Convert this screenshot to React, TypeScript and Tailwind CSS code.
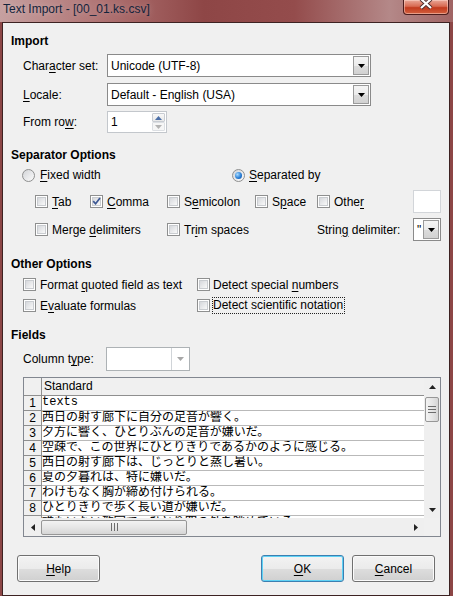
import React from "react";

const F = "font-['Liberation_Sans','Noto_Sans',sans-serif]";

function M({ t, i }: { t: string; i?: number }) {
  if (i === undefined || i < 0) return <span className="whitespace-nowrap">{t}</span>;
  return (
    <span className="whitespace-nowrap">
      {t.slice(0, i)}
      <span className="underline decoration-1 underline-offset-[2px]">{t[i]}</span>
      {t.slice(i + 1)}
    </span>
  );
}

function Check({ checked }: { checked?: boolean }) {
  return (
    <span className="relative flex h-[13px] w-[13px] shrink-0 items-center justify-center border border-[#8e8f8f] bg-white">
      <span className="h-[9px] w-[9px] border border-[#c9ccd0] bg-[linear-gradient(135deg,#d6d8dc,#f9f9f9)]" />
      {checked && (
        <svg className="absolute left-[0px] top-[0px]" width="11" height="11" viewBox="0 0 11 11">
          <path d="M2.2 5.2 L4.6 7.8 L9 2" fill="none" stroke="#3b5793" strokeWidth="1.7" />
        </svg>
      )}
    </span>
  );
}

function Radio({ on }: { on?: boolean }) {
  return (
    <span className="flex h-[13px] w-[13px] shrink-0 items-center justify-center rounded-full border border-[#8e8f8f] bg-[linear-gradient(135deg,#d2d4d8,#fbfbfb)]">
      {on && (
        <span className="h-[7px] w-[7px] rounded-full bg-[radial-gradient(circle_at_35%_35%,#a8dbff,#2a7fd6_55%,#0c4c9c)]" />
      )}
    </span>
  );
}

function Tri({ dir = "down", color = "#000" }: { dir?: "down" | "up" | "left" | "right"; color?: string }) {
  const d =
    dir === "down"
      ? "M0 0H7L3.5 4Z"
      : dir === "up"
      ? "M0 4H7L3.5 0Z"
      : dir === "left"
      ? "M4 0V7L0 3.5Z"
      : "M0 0V7L4 3.5Z";
  const w = dir === "down" || dir === "up" ? 7 : 4;
  const h = dir === "down" || dir === "up" ? 4 : 7;
  return (
    <svg width={w} height={h} viewBox={`0 0 ${w} ${h}`}>
      <path d={d} fill={color} />
    </svg>
  );
}

function Combo({ text, className, disabled }: { text?: string; className?: string; disabled?: boolean }) {
  return (
    <div
      className={`flex shrink-0 border bg-white ${
        disabled ? "border-[#adb2b5] p-0" : "border-[#8a8a8a] p-[1px]"
      } ${className ?? ""}`}
    >
      <div className="flex flex-1 items-center overflow-hidden whitespace-nowrap pl-[2px]">{text}</div>
      {disabled ? (
        <div className="flex w-[18px] items-center justify-center border-l border-[#d0d4d8] bg-white">
          <Tri color="#a7a7a7" />
        </div>
      ) : (
        <div className="flex w-[16px] items-center justify-center border border-[#9a9a9a] bg-[linear-gradient(#f5f5f5,#ebebeb_50%,#dcdcdc_51%,#d2d2d2)]">
          <Tri />
        </div>
      )}
    </div>
  );
}

function Btn({ children, focus }: { children: React.ReactNode; focus?: boolean }) {
  return (
    <div
      className={`flex h-[27px] w-[83px] shrink-0 items-center justify-center rounded-[3px] border ${
        focus ? "border-[#3c7fb1] shadow-[inset_0_0_0_1px_#5fd2f5]" : "border-[#707070] shadow-[inset_0_0_0_1px_#fbfbfb]"
      } bg-[linear-gradient(#f3f3f3,#ebebeb_50%,#dddddd_51%,#d0d0d0)]`}
    >
      {children}
    </div>
  );
}

const rows = [
  "texts",
  "西日の射す廊下に自分の足音が響く。",
  "夕方に響く、ひとりぶんの足音が嫌いだ。",
  "空疎で、この世界にひとりきりであるかのように感じる。",
  "西日の射す廊下は、じっとりと蒸し暑い。",
  "夏の夕暮れは、特に嫌いだ。",
  "わけもなく胸が締め付けられる。",
  "ひとりきりで歩く長い道が嫌いだ。",
  "誰もいない教室で、ひとり窓の外を眺めている。",
];

export default function App() {
  return (
    <div className={`${F} h-[596px] w-[453px] overflow-hidden bg-[#8c4646] text-[12px] text-black`}>
      {/* Title bar */}
      <div className="flex h-[22px] items-start bg-[linear-gradient(90deg,#c6a0a0_0%,#b07474_22%,#8e4646_45%,#944c4c_65%,#b48888_86%,#a06464_100%)]">
        <div className="pl-[3px] pt-[1px] text-[12px] leading-[16px] text-[#13243c] [text-shadow:0_0_6px_rgba(255,255,255,0.35)]">
          Text Import - [00_01.ks.csv]
        </div>
        <div className="ml-auto mr-[4px] flex h-[15px] w-[46px] items-start justify-center rounded-b-[4px] border border-t-0 border-[#4b1d1d] bg-[linear-gradient(#e9a797,#d86a52_45%,#c23a1e_55%,#d2603e)] shadow-[inset_0_0_0_1px_rgba(255,220,210,0.5)]">
          <svg width="14" height="10" viewBox="0 0 14 10">
            <path d="M2 -1 L12 8 M12 -1 L2 8" stroke="#4a2a2a" strokeWidth="4" />
            <path d="M2 -1 L12 8 M12 -1 L2 8" stroke="#ffffff" strokeWidth="2.2" />
          </svg>
        </div>
      </div>

      {/* Content */}
      <div className="ml-[2px] h-[574px] w-[448px] border border-[#3d2222] bg-[#f0f0f0]">
        <div className="flex flex-col pt-[8px]">
          <div className="flex h-[20px] items-center pl-[8px] font-bold">Import</div>

          <div className="mt-[3px] flex h-[23px] items-center pl-[20px]">
            <div className="w-[84px]">
              <M t="Character set:" i={4} />
            </div>
            <Combo className="h-[23px] w-[264px]" text="Unicode (UTF-8)" />
          </div>

          <div className="mt-[6px] flex h-[23px] items-center pl-[20px]">
            <div className="w-[84px]">
              <M t="Locale:" i={0} />
            </div>
            <Combo className="h-[23px] w-[264px]" text="Default - English (USA)" />
          </div>

          <div className="mt-[5px] flex h-[22px] items-center pl-[20px]">
            <div className="w-[84px]">
              <M t="From row:" i={7} />
            </div>
            <div className="flex h-[22px] w-[60px] border border-[#c3c7cc] bg-white">
              <div className="flex flex-1 items-center pl-[3px]">1</div>
              <div className="flex w-[15px] flex-col p-[1px]">
                <div className="flex flex-1 items-center justify-center rounded-[1px] border border-[#c8ccd2] bg-[linear-gradient(#f8f8f8,#e8e8e8)]">
                  <Tri dir="up" color="#4b6fa8" />
                </div>
                <div className="flex flex-1 items-center justify-center rounded-[1px] border border-[#dcdfe3] bg-[#f6f6f6]">
                  <Tri dir="down" color="#b3b3b3" />
                </div>
              </div>
            </div>
          </div>

          <div className="mt-[12px] flex h-[20px] items-center pl-[8px] font-bold">Separator Options</div>

          <div className="flex h-[20px] items-center pl-[19px]">
            <div className="flex w-[210px] items-center gap-[5px]">
              <Radio />
              <M t="Fixed width" i={0} />
            </div>
            <div className="flex items-center gap-[4px]">
              <Radio on />
              <M t="Separated by" i={0} />
            </div>
          </div>

          <div className="mt-[5px] flex h-[23px] items-center pl-[32px]">
            <div className="flex w-[55px] items-center gap-[4px]">
              <Check />
              <M t="Tab" i={0} />
            </div>
            <div className="flex w-[77px] items-center gap-[4px]">
              <Check checked />
              <M t="Comma" i={0} />
            </div>
            <div className="flex w-[88px] items-center gap-[4px]">
              <Check />
              <M t="Semicolon" i={1} />
            </div>
            <div className="flex w-[62px] items-center gap-[4px]">
              <Check />
              <M t="Space" i={1} />
            </div>
            <div className="flex w-[96px] items-center gap-[4px]">
              <Check />
              <M t="Other" i={4} />
            </div>
            <div className="h-[23px] w-[28px] border border-[#d2d5d9] bg-white" />
          </div>

          <div className="mt-[5px] flex h-[23px] items-center pl-[32px]">
            <div className="flex w-[132px] items-center gap-[4px]">
              <Check />
              <M t="Merge delimiters" i={6} />
            </div>
            <div className="flex w-[150px] items-center gap-[4px]">
              <Check />
              <M t="Trim spaces" i={2} />
            </div>
            <div className="w-[96px]">
              <M t="String delimiter:" i={5} />
            </div>
            <Combo className="h-[23px] w-[28px]" text={'"'} />
          </div>

          <div className="mt-[13px] flex h-[20px] items-center pl-[8px] font-bold">Other Options</div>

          <div className="flex h-[21px] items-center pl-[20px]">
            <div className="flex w-[174px] items-center gap-[4px]">
              <Check />
              <M t="Format quoted field as text" i={7} />
            </div>
            <div className="flex items-center gap-[3px]">
              <Check />
              <M t="Detect special numbers" i={15} />
            </div>
          </div>

          <div className="flex h-[21px] items-center pl-[20px]">
            <div className="flex w-[174px] items-center gap-[4px]">
              <Check />
              <M t="Evaluate formulas" i={1} />
            </div>
            <div className="flex items-center gap-[2px]">
              <Check />
              <span className="whitespace-nowrap border border-dotted border-[#222] pr-[1px] leading-[15px]">
                Detect scientific notation
              </span>
            </div>
          </div>

          <div className="mt-[9px] flex h-[20px] items-center pl-[8px] font-bold">Fields</div>

          <div className="mt-[2px] flex h-[24px] items-center pl-[20px]">
            <div className="w-[83px]">
              <M t="Column type:" i={8} />
            </div>
            <Combo className="h-[24px] w-[84px]" disabled />
          </div>

          {/* Table */}
          <div className="ml-[20px] mt-[6px] flex h-[160px] w-[418px] flex-col border border-[#828790] bg-[#f0f0f0]">
            <div className="flex h-[140px]">
              <div className="flex flex-1 flex-col overflow-hidden">
                <div className="flex h-[18px] shrink-0 border-b border-[#8f8f8f]">
                  <div className="w-[18px] shrink-0 border-r border-[#8f8f8f]" />
                  <div className="flex-1 pl-[2px] leading-[17px]">Standard</div>
                </div>
                {rows.map((r, i) => (
                  <div key={i} className="flex h-[15px] shrink-0 overflow-hidden">
                    <div className="w-[18px] shrink-0 overflow-hidden border-b border-r border-[#8f8f8f] text-center text-[12px] leading-[15px]">
                      {i + 1}
                    </div>
                    <div
                      className={`flex-1 overflow-hidden whitespace-nowrap border-b border-[#b9b9b9] bg-white font-['Liberation_Mono','Noto_Sans_CJK_JP',monospace] text-[12px] ${
                        i === 0 ? "leading-[12px]" : "leading-[14px]"
                      }`}
                    >
                      {r}
                    </div>
                  </div>
                ))}
              </div>
              {/* vertical scrollbar */}
              <div className="flex w-[16px] shrink-0 flex-col bg-[#efefef]">
                <div className="flex h-[17px] items-center justify-center">
                  <Tri dir="up" color="#222" />
                </div>
                <div className="mx-[1px] mt-[2px] flex h-[25px] flex-col items-center justify-center gap-[2px] rounded-[2px] border border-[#979797] bg-[linear-gradient(90deg,#f3f3f3,#e6e6e6_50%,#d6d6d6)]">
                  <div className="h-[1px] w-[8px] bg-[#6c6c6c]" />
                  <div className="h-[1px] w-[8px] bg-[#6c6c6c]" />
                  <div className="h-[1px] w-[8px] bg-[#6c6c6c]" />
                </div>
                <div className="flex-1" />
                <div className="flex h-[17px] items-center justify-center">
                  <Tri dir="down" color="#222" />
                </div>
              </div>
            </div>
            {/* horizontal scrollbar */}
            <div className="flex h-[18px]">
              <div className="flex flex-1 items-center bg-[#efefef]">
                <div className="flex w-[17px] items-center justify-center">
                  <Tri dir="left" color="#222" />
                </div>
                <div className="flex h-[15px] w-[146px] items-center justify-center gap-[2px] rounded-[2px] border border-[#979797] bg-[linear-gradient(#f3f3f3,#e6e6e6_50%,#d6d6d6)]">
                  <div className="h-[8px] w-[1px] bg-[#6c6c6c]" />
                  <div className="h-[8px] w-[1px] bg-[#6c6c6c]" />
                  <div className="h-[8px] w-[1px] bg-[#6c6c6c]" />
                </div>
                <div className="flex-1" />
                <div className="flex w-[17px] items-center justify-center">
                  <Tri dir="right" color="#222" />
                </div>
              </div>
              <div className="w-[16px] bg-[#f0f0f0]" />
            </div>
          </div>

          {/* Buttons */}
          <div className="mt-[18px] flex h-[27px] items-center pl-[14px]">
            <Btn>
              <M t="Help" i={0} />
            </Btn>
            <div className="flex-1" />
            <Btn focus>
              <M t="OK" i={0} />
            </Btn>
            <div className="w-[8px]" />
            <Btn>
              <M t="Cancel" i={0} />
            </Btn>
            <div className="w-[14px]" />
          </div>
        </div>
      </div>
    </div>
  );
}
